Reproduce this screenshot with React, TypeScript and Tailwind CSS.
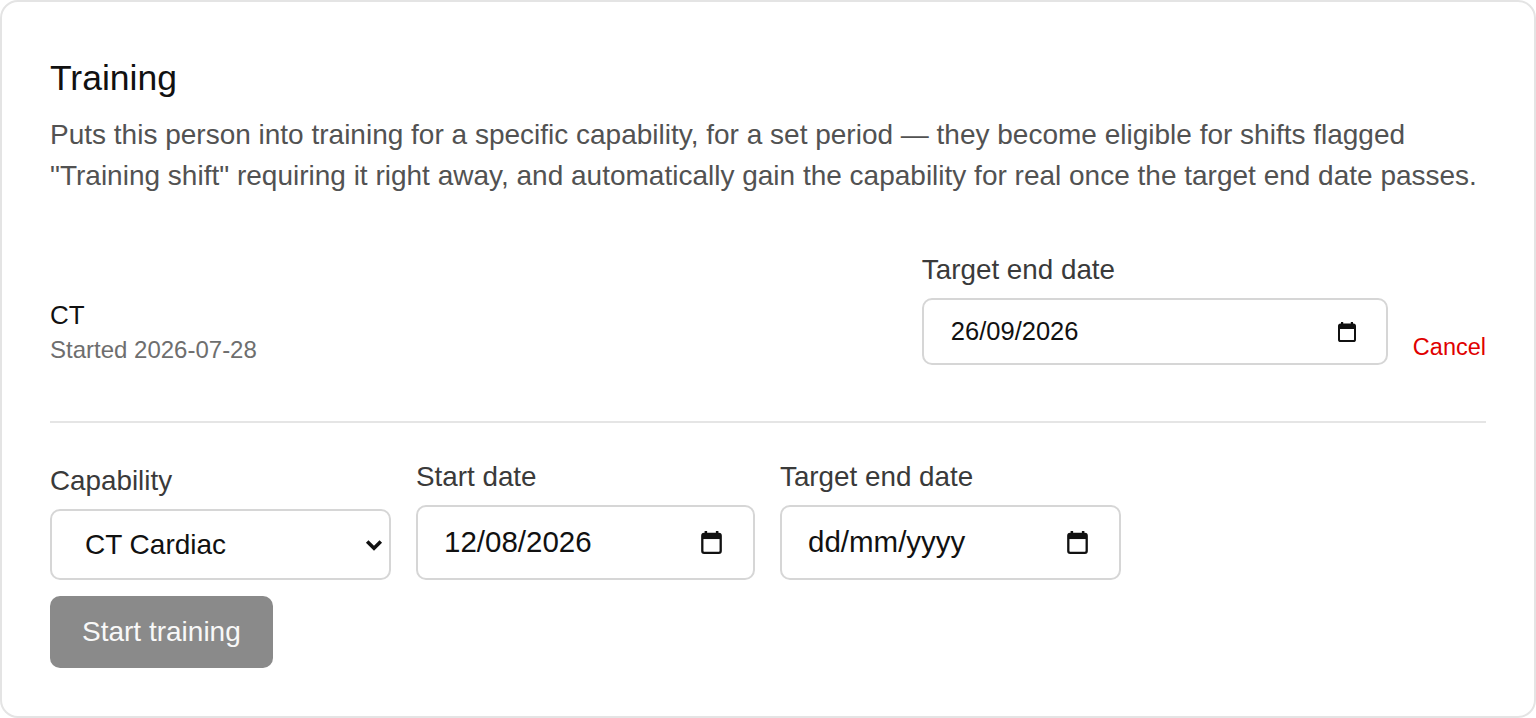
import React from "react";

function CalendarIcon({ className }: { className?: string }) {
  return (
    <svg className={className} viewBox="0 0 18 20" fill="none">
      <rect x="3" y="0" width="2.2" height="3.5" fill="#111" />
      <rect x="12.8" y="0" width="2.2" height="3.5" fill="#111" />
      <rect x="1" y="2.5" width="16" height="16.5" rx="1.6" stroke="#111" strokeWidth="2" />
      <rect x="1" y="2.5" width="16" height="4.5" fill="#111" />
    </svg>
  );
}

function Chevron() {
  return (
    <svg className="w-[18px] h-[12px]" viewBox="0 0 18 12" fill="none">
      <path d="M2.2 2.5 L9 9.2 L15.8 2.5" stroke="#111" strokeWidth="3.6" strokeLinecap="butt" strokeLinejoin="miter" />
    </svg>
  );
}

export default function App() {
  return (
    <div
      className="w-[1536px] h-[718px] bg-white"
      style={{ fontFamily: '"Liberation Sans", Arial, sans-serif' }}
    >
      <div className="box-border h-[718px] w-[1536px] border-2 border-[#e4e4e4] rounded-[18px] px-[48px] pt-[55px]">
        <h2 className="text-[35.5px] leading-[42px] text-[#111] font-normal">Training</h2>
        <p className="mt-[15px] text-[28px] leading-[41px] text-[#525252]">
          Puts this person into training for a specific capability, for a set period — they become eligible for shifts flagged "Training shift" requiring it right away, and automatically gain the capability for real once the target end date passes.
        </p>

        <div className="mt-[58px] flex items-end justify-between">
          <div className="flex flex-col">
            <div className="text-[26px] leading-[30px] text-[#111]">CT</div>
            <div className="mt-[5px] text-[24px] leading-[30px] text-[#6e6e6e]">Started 2026-07-28</div>
          </div>
          <div className="flex items-end gap-[25px]">
            <div className="flex flex-col">
              <div className="text-[27.8px] leading-[32px] text-[#3a3a3a] mb-[12px]">Target end date</div>
              <div className="box-border w-[466px] h-[67px] border-2 border-[#d6d6d6] rounded-[10px] flex items-center justify-between pl-[27px] pr-[30px]">
                <span className="text-[25.5px] text-[#111]">26/09/2026</span>
                <CalendarIcon className="w-[18px] h-[20px]" />
              </div>
            </div>
            <div className="text-[23.5px] leading-[30px] text-[#e00000] mb-[3px]">Cancel</div>
          </div>
        </div>

        <div className="mt-[56px] h-[2px] bg-[#e5e5e5]" />

        <div className="mt-[38px] flex items-end gap-[25px]">
          <div className="flex flex-col">
            <div className="text-[27.8px] leading-[32px] text-[#3a3a3a] mb-[12px]">Capability</div>
            <div className="box-border w-[341px] h-[71px] border-2 border-[#d6d6d6] rounded-[10px] flex items-center justify-between pl-[33px] pr-[6px]">
              <span className="text-[28px] text-[#111]">CT Cardiac</span>
              <Chevron />
            </div>
          </div>
          <div className="flex flex-col">
            <div className="text-[27.8px] leading-[32px] text-[#3a3a3a] mb-[12px]">Start date</div>
            <div className="box-border w-[339px] h-[75px] border-2 border-[#d6d6d6] rounded-[10px] flex items-center justify-between pl-[26px] pr-[31px]">
              <span className="text-[29.5px] text-[#111]">12/08/2026</span>
              <CalendarIcon className="w-[21px] h-[23px]" />
            </div>
          </div>
          <div className="flex flex-col">
            <div className="text-[27.8px] leading-[32px] text-[#3a3a3a] mb-[12px]">Target end date</div>
            <div className="box-border w-[341px] h-[75px] border-2 border-[#d6d6d6] rounded-[10px] flex items-center justify-between pl-[26px] pr-[31px]">
              <span className="text-[29.5px] text-[#111]">dd/mm/yyyy</span>
              <CalendarIcon className="w-[21px] h-[23px]" />
            </div>
          </div>
        </div>

        <button className="mt-[16px] box-border h-[72px] px-[32px] rounded-[10px] bg-[#8a8a8a] text-[28px] text-[#f8f8f8]">
          Start training
        </button>
      </div>
    </div>
  );
}
